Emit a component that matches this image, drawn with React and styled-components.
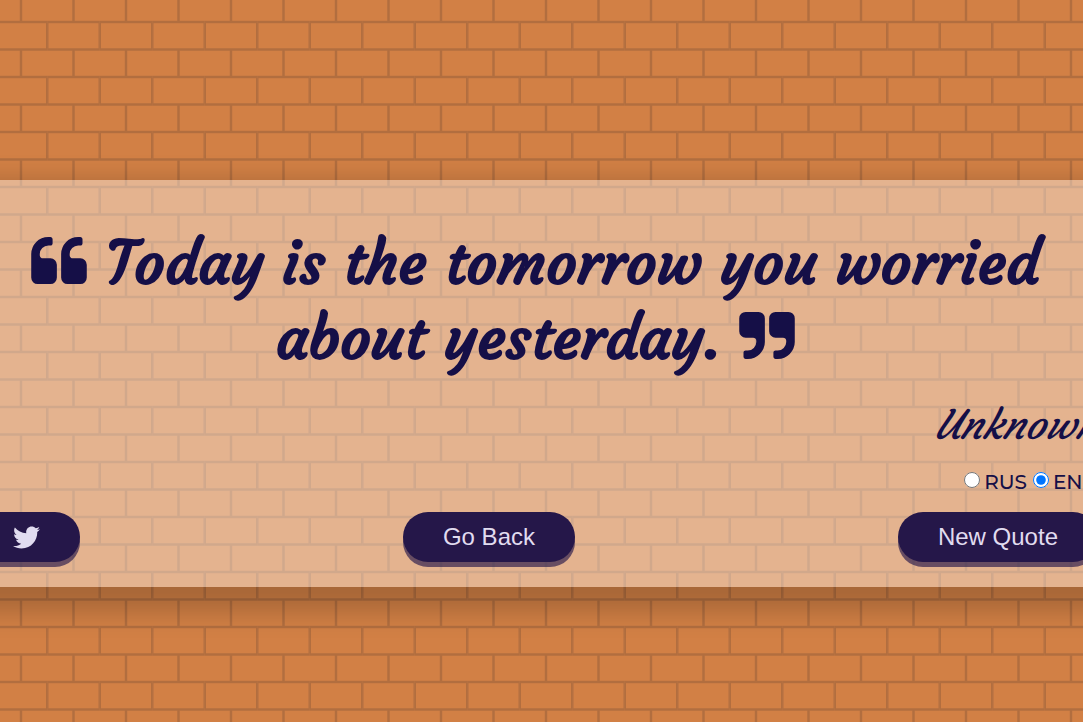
import React, { useState } from "react";
import styled, { createGlobalStyle } from "styled-components";
import { FaTwitter } from "react-icons/fa";

const brick =
  "M0 0h42v44H0V0zm1 1h40v20H1V1zM0 23h20v20H0V23zm22 0h20v20H22V23z";
const wall = encodeURIComponent(
  `<svg xmlns="http://www.w3.org/2000/svg" width="105" height="55" viewBox="0 0 84 44"><g transform="translate(.2 0)" fill="#925b3a" fill-opacity="0.5" fill-rule="evenodd"><path transform="translate(-42 0)" d="${brick}"/><path d="${brick}"/><path transform="translate(42 0)" d="${brick}"/></g></svg>`
);

const GlobalStyle = createGlobalStyle`
  *, *::before, *::after { box-sizing: border-box; }
  html { overflow-x: hidden; }
  body {
    margin: 0;
    min-height: 100vh;
    overflow-x: hidden;
    background: #d28045 url("data:image/svg+xml,${wall}") 47px 22px / 105px 55px;
    color: #150f47;
  }
`;

const Page = styled.main`
  padding-top: 180px;
`;

/* The panel is wider than the page and bleeds past both of its sides. */
const Panel = styled.section`
  display: flex;
  flex-direction: column;
  margin: 0 -15px 0 -27px;
  padding: 45px 0 25px;
  background: rgba(255, 255, 255, 0.4);
  box-shadow: 0 13px 25px 12px rgba(0, 0, 0, 0.2);
`;

const Quote = styled.h1`
  margin: 0;
  padding: 0 40px;
  font: 700 60px/75px Courgette, Lato, sans-serif;
  text-align: center;
`;

const QuoteMark = styled.svg`
  width: 56px;
  height: 47px;
  fill: currentColor;
`;

const Author = styled.p`
  margin: 25px 0 0;
  font: italic 400 40px/50px Courgette, Lato, sans-serif;
  text-align: right;
`;

const Languages = styled.div`
  display: flex;
  justify-content: flex-end;
  gap: 6px;
  margin: 19px 0 17px;
`;

const Language = styled.label`
  display: flex;
  align-items: center;
  gap: 4px;
  font: 500 20px/26px Montserrat, Inter, sans-serif;
`;

const Radio = styled.input`
  width: 16px;
  height: 16px;
  margin: 0 0 4px;
`;

const Actions = styled.div`
  display: flex;
  justify-content: space-between;
`;

const Button = styled.button`
  display: flex;
  align-items: center;
  height: 50px;
  padding: 0 40px;
  border: 0;
  border-radius: 25px;
  background: #251749;
  box-shadow: 0 5px 0 rgba(37, 23, 73, 0.65);
  color: #e1dcf0;
  font: 24px "Liberation Sans", Arial, sans-serif;
  cursor: pointer;
`;

const openMark =
  "M768 832v384q0 80-56 136t-136 56H192q-80 0-136-56T0 1216V512q0-104 40.5-198.5T150 150 313.500 40.500 512 0h64q26 0 45 19t19 45v128q0 26-19 45t-45 19h-64q-106 0-181 75t-75 181v32q0 40 28 68t68 28h224q80 0 136 56t56 136z";
const closeMark =
  "M768 192v704q0 104-40.500 198.500T618 1258t-163.500 109.500T256 1408h-64q-26 0-45-19t-19-45v-128q0-26 19-45t45-19h64q106 0 181-75t75-181v-32q0-40-28-68t-68-28H192q-80 0-136-56T0 576V192q0-80 56-136T192 0h384q80 0 136 56t56 136z";

function Mark({ path }) {
  return (
    <QuoteMark viewBox="0 0 1664 1408" aria-hidden="true">
      <path d={path} />
      <path d={path} transform="translate(896 0)" />
    </QuoteMark>
  );
}

export default function App() {
  const [language, setLanguage] = useState("ENG");
  return (
    <>
      <GlobalStyle />
      <Page>
        <Panel>
          <Quote>
            <Mark path={openMark} /> Today is the tomorrow you worried about
            yesterday. <Mark path={closeMark} />
          </Quote>
          <Author>Unknown</Author>
          <Languages role="radiogroup" aria-label="Language">
            {["RUS", "ENG"].map((name) => (
              <Language key={name}>
                <Radio
                  type="radio"
                  name="language"
                  value={name}
                  checked={language === name}
                  onChange={() => setLanguage(name)}
                />
                {name}
              </Language>
            ))}
          </Languages>
          <Actions>
            <Button type="button" aria-label="Tweet quote">
              <FaTwitter size={27} />
            </Button>
            <Button type="button">Go Back</Button>
            <Button type="button">New Quote</Button>
          </Actions>
        </Panel>
      </Page>
    </>
  );
}
